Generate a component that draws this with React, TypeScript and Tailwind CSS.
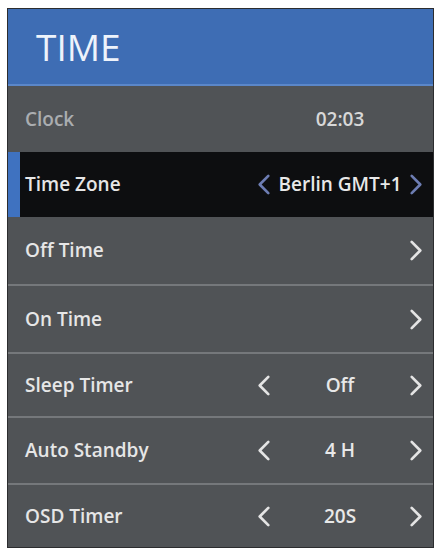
import type { ReactNode } from 'react'

type Row = {
  label: string
  h: string
  value?: string
  left?: boolean
  right?: boolean
  active?: boolean
  dim?: boolean
}

const rows: Row[] = [
  { label: 'Clock', h: 'h-[66px]', value: '02:03', dim: true },
  { label: 'Time Zone', h: 'h-[65px]', value: 'Berlin GMT+1', left: true, right: true, active: true },
  { label: 'Off Time', h: 'h-[67px]', right: true },
  { label: 'On Time', h: 'h-[68px]', right: true },
  { label: 'Sleep Timer', h: 'h-[64px]', value: 'Off', left: true, right: true },
  { label: 'Auto Standby', h: 'h-[67px]', value: '4 H', left: true, right: true },
  { label: 'OSD Timer', h: 'h-[64px]', value: '20S', left: true, right: true },
]

function Chevron({ dir, className }: { dir: 'left' | 'right'; className: string }) {
  return (
    <svg className={className} viewBox="0 0 14 22" fill="none" stroke="currentColor" strokeWidth="2.8" strokeLinecap="round" strokeLinejoin="round">
      {dir === 'left' ? <polyline points="11.5,2 2.5,11 11.5,20" /> : <polyline points="2.5,2 11.5,11 2.5,20" />}
    </svg>
  )
}

function MenuRow({ row, divider }: { row: Row; divider: boolean }): ReactNode {
  const arrowColor = row.active ? 'text-[#6d7db3]' : 'text-[#e4e4e4]'
  return (
    <div
      className={
        'flex items-center ' +
        row.h +
        ' ' +
        (row.active ? 'bg-[#0d0e10] border-l-[12px] border-[#3f72c0] pl-[5px]' : 'pl-[17px]') +
        (divider ? ' border-t-2 border-t-[#75787b]' : '')
      }
    >
      <span className={'flex-1 text-[19px] font-semibold ' + (row.dim ? 'text-[#aaadb0]' : 'text-[#e6e6e6]')}>
        {row.label}
      </span>
      <div className="mr-[10px] flex w-[166px] items-center">
        <div className="flex w-[14px] justify-start">
          {row.left && <Chevron dir="left" className={'h-[21px] w-[14px] ' + arrowColor} />}
        </div>
        <span className={'flex-1 text-center text-[19px] font-semibold ' + (row.dim ? 'text-[#d8d8d8]' : 'text-[#e8e8e8]')}>
          {row.value}
        </span>
        <div className="flex w-[14px] justify-end">
          {row.right && <Chevron dir="right" className={'h-[21px] w-[14px] ' + arrowColor} />}
        </div>
      </div>
    </div>
  )
}

export default function App() {
  return (
    <div className="h-[551px] w-[437px] bg-white pt-[8px] pl-[7px]" style={{ fontFamily: '"Open Sans", "Noto Sans", sans-serif' }}>
      <div className="w-[427px] border border-[#2c2d2f] bg-[#505356]">
        <div className="flex h-[77px] items-center border-b-2 border-[#5b87c9] bg-[#3e6db4] pl-[28px]">
          <span className="text-[37px] leading-none text-[#eef3fb]">TIME</span>
        </div>
        {rows.map((row, i) => (
          <MenuRow key={row.label} row={row} divider={i > 2} />
        ))}
      </div>
    </div>
  )
}
